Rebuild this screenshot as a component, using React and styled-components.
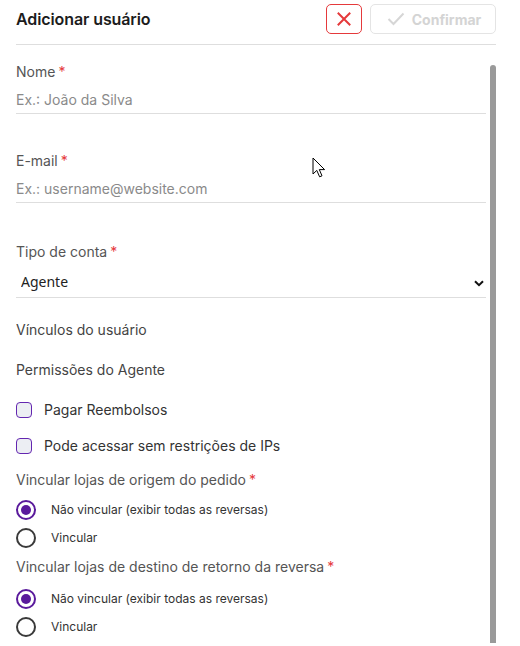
import styled, { createGlobalStyle } from "styled-components";

const GlobalStyle = createGlobalStyle`
	html, body {
		margin: 0;
		padding: 0;
		background: #fff;
		height: 100%;
	}
	body {
		font-family: Inter, "Noto Sans", sans-serif;
		color: #333;
		overflow: hidden;
	}
	#root {
		height: 100%;
	}
`;

const Page = styled.div`
	height: 646px;
	display: flex;
	flex-direction: column;
	padding: 0 24px 0 16px;
	box-sizing: border-box;
	position: relative;
`;

const Header = styled.header`
	display: flex;
	align-items: center;
	justify-content: space-between;
	height: 38px;
	border-bottom: 1px solid #dedede;
	flex-shrink: 0;
	padding-bottom: 6px;
`;

const Title = styled.h1`
	margin: 0;
	font-size: 16px;
	font-weight: 600;
	color: #1c1c1c;
	letter-spacing: -0.1px;
`;

const Actions = styled.div`
	display: flex;
	gap: 8px;
	align-items: center;
`;

const IconButton = styled.button`
	width: 36px;
	height: 30px;
	border: 1px solid #e5393b;
	border-radius: 5px;
	background: #fff;
	display: flex;
	align-items: center;
	justify-content: center;
	padding: 0;
`;

const ConfirmButton = styled.button`
	width: 126px;
	height: 30px;
	border: 1px solid #e4e4e4;
	border-radius: 5px;
	background: #fff;
	color: #d4d4d4;
	font-family: inherit;
	font-size: 14px;
	font-weight: 700;
	display: flex;
	align-items: center;
	justify-content: center;
	gap: 7px;
	padding: 0 0 0 2px;
`;

const Body = styled.div`
	flex: 1;
	min-height: 0;
	display: flex;
`;

const Content = styled.div`
	flex: 1;
	min-width: 0;
	overflow: hidden;
	padding-right: 4px;
`;

const ScrollTrack = styled.div`
	width: 6px;
	flex-shrink: 0;
	display: flex;
	flex-direction: column;
	padding: 20px 0 3px;
	box-sizing: border-box;
`;

const ScrollThumb = styled.div`
	flex: 1;
	background: #9a9a9a;
	border-radius: 3px 3px 0 0;
`;

const Field = styled.div`
	display: flex;
	flex-direction: column;
	margin-top: ${(p) => p.$top}px;
`;

const Label = styled.label`
	font-size: 14px;
	line-height: 20px;
	color: #555;
`;

const Req = styled.span`
	color: #e5393b;
	margin-left: 3px;
`;

const Input = styled.input`
	border: none;
	border-bottom: 1px solid #dedede;
	outline: none;
	font-family: inherit;
	font-size: 14px;
	height: 28px;
	padding: 0;
	margin-top: 3px;
	color: #333;
	&::placeholder {
		color: #8a8a8a;
	}
`;

const SelectWrap = styled.div`
	position: relative;
	margin-top: 4px;
`;

const Select = styled.select`
	appearance: none;
	width: 100%;
	height: 32px;
	border: none;
	border-bottom: 1px solid #dedede;
	background: #fff;
	font-family: "Noto Sans", sans-serif;
	font-size: 14px;
	color: #222;
	padding: 0 0 0 5px;
	outline: none;
`;

const Chevron = styled.svg`
	position: absolute;
	right: 2px;
	top: 14px;
	pointer-events: none;
`;

const Section = styled.div`
	font-size: 14px;
	line-height: 20px;
	color: #444;
	margin-top: ${(p) => p.$top}px;
`;

const CheckRow = styled.label`
	display: flex;
	align-items: center;
	gap: 12px;
	font-size: 14px;
	line-height: 20px;
	color: #333;
	margin-top: ${(p) => p.$top}px;
`;

const Box = styled.span`
	width: 14px;
	height: 14px;
	border: 1.5px solid #6326b0;
	border-radius: 4px;
	background: #eceef3;
	flex-shrink: 0;
`;

const RadioList = styled.div`
	margin-top: ${(p) => p.$gap}px;
`;

const RadioRow = styled.label`
	display: flex;
	align-items: center;
	gap: 15px;
	font-size: 12px;
	line-height: 20px;
	color: #333;
	height: 28px;
`;

const Radio = styled.span`
	width: 16px;
	height: 16px;
	border-radius: 50%;
	border: 2px solid ${(p) => (p.$checked ? "#5a1a9c" : "#3a3a3a")};
	flex-shrink: 0;
	display: flex;
	align-items: center;
	justify-content: center;
	&::after {
		content: "";
		width: 10px;
		height: 10px;
		border-radius: 50%;
		background: ${(p) => (p.$checked ? "#5a1a9c" : "transparent")};
	}
`;

const Cursor = styled.svg`
	position: absolute;
	left: 312px;
	top: 157px;
`;

const RadioGroup = ({ label, top, gap }) => (
	<Field $top={top}>
		<Label>
			{label}
			<Req>*</Req>
		</Label>
		<RadioList $gap={gap}>
			<RadioRow>
				<Radio $checked />
				Não vincular (exibir todas as reversas)
			</RadioRow>
			<RadioRow>
				<Radio />
				Vincular
			</RadioRow>
		</RadioList>
	</Field>
);

export default function App() {
	return (
		<>
			<GlobalStyle />
			<Page>
				<Header>
					<Title>Adicionar usuário</Title>
					<Actions>
						<IconButton aria-label="Cancelar">
							<svg width="16" height="16" viewBox="0 0 16 16">
								<path
									d="M2.5 2.5 L13.5 13.5 M13.5 2.5 L2.5 13.5"
									stroke="#e5393b"
									strokeWidth="2"
									strokeLinecap="square"
								/>
							</svg>
						</IconButton>
						<ConfirmButton disabled>
							<svg width="18" height="14" viewBox="0 0 18 14">
								<path
									d="M1.5 7 L6.5 12 L16.5 1.5"
									stroke="#d6d6d6"
									strokeWidth="2"
									fill="none"
								/>
							</svg>
							Confirmar
						</ConfirmButton>
					</Actions>
				</Header>
				<Body>
					<Content>
						<Field $top={17}>
							<Label>
								Nome<Req>*</Req>
							</Label>
							<Input placeholder="Ex.: João da Silva" />
						</Field>
						<Field $top={37}>
							<Label>
								E-mail<Req>*</Req>
							</Label>
							<Input placeholder="Ex.: username@website.com" />
						</Field>
						<Field $top={39}>
							<Label>
								Tipo de conta<Req>*</Req>
							</Label>
							<SelectWrap>
								<Select defaultValue="agente">
									<option value="agente">Agente</option>
								</Select>
								<Chevron width="10" height="7" viewBox="0 0 10 7">
									<path
										d="M1 1.2 L5 5.2 L9 1.2"
										stroke="#111"
										strokeWidth="2"
										fill="none"
									/>
								</Chevron>
							</SelectWrap>
						</Field>
						<Section $top={22}>Vínculos do usuário</Section>
						<Section $top={20}>Permissões do Agente</Section>
						<CheckRow $top={20}>
							<Box />
							Pagar Reembolsos
						</CheckRow>
						<CheckRow $top={16}>
							<Box />
							Pode acessar sem restrições de IPs
						</CheckRow>
						<RadioGroup
							label="Vincular lojas de origem do pedido"
							top={14}
							gap={6}
						/>
						<RadioGroup
							label="Vincular lojas de destino de retorno da reversa"
							top={5}
							gap={8}
						/>
					</Content>
					<ScrollTrack>
						<ScrollThumb />
					</ScrollTrack>
				</Body>
				<Cursor width="14" height="22" viewBox="0 0 14 22">
					<path
						d="M1 1 L1 17 L4.8 13.4 L7.6 19.8 L10 18.8 L7.3 12.6 L12.6 12.6 Z"
						fill="#fff"
						stroke="#000"
						strokeWidth="1"
						strokeLinejoin="round"
					/>
				</Cursor>
			</Page>
		</>
	);
}
